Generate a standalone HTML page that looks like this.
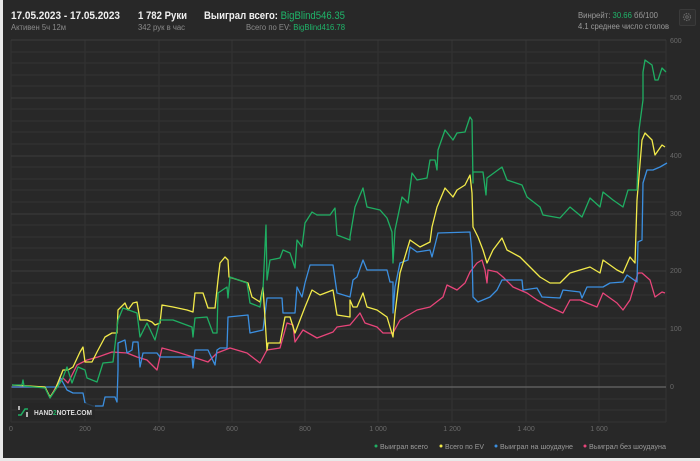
<!DOCTYPE html>
<html><head><meta charset="utf-8"><style>
html,body{margin:0;padding:0;width:700px;height:461px;background:#e8e8e8;overflow:hidden;font-family:"Liberation Sans","Noto Sans CJK SC",sans-serif}
#p{position:absolute;left:3px;top:0;width:697px;height:458px;background:#282828}
</style></head><body>
<div id="p"></div>
<div style="position:absolute;left:679px;top:9px;width:15px;height:15px;border:1px solid #3a3a3a;background:#2e2e2e;border-radius:2px"></div>
<svg style="position:absolute;left:681px;top:11px" width="12" height="12" viewBox="0 0 12 12"><circle cx="6" cy="6" r="3.5" fill="none" stroke="#666" stroke-width="1.2" stroke-dasharray="1.5 1"/><circle cx="6" cy="6" r="1.3" fill="none" stroke="#666"/></svg>
<svg style="position:absolute;left:0;top:0" width="700" height="461" font-family="Liberation Sans,sans-serif">
<g font-size="11" font-weight="bold" fill="#f0f0f0">
<text x="11" y="19" textLength="109" lengthAdjust="spacingAndGlyphs">17.05.2023 - 17.05.2023</text>
<text x="138" y="19" textLength="49" lengthAdjust="spacingAndGlyphs">1 782 Руки</text>
<text x="204" y="19" textLength="141" lengthAdjust="spacingAndGlyphs">Выиграл всего: <tspan fill="#1fb56a" font-weight="normal">BigBlind546.35</tspan></text>
</g>
<g font-size="8" fill="#8a8a8a">
<text x="11" y="30" textLength="55" lengthAdjust="spacingAndGlyphs">Активен 5ч 12м</text>
<text x="138" y="30" textLength="47" lengthAdjust="spacingAndGlyphs">342 рук в час</text>
<text x="246" y="30" textLength="99" lengthAdjust="spacingAndGlyphs">Всего по EV: <tspan fill="#1fb56a">BigBlind416.78</tspan></text>
</g>
<g font-size="8.5" fill="#9a9a9a">
<text x="578" y="18" textLength="80" lengthAdjust="spacingAndGlyphs">Винрейт: <tspan fill="#1fb56a">30.66</tspan> бб/100</text>
<text x="578" y="29" textLength="91" lengthAdjust="spacingAndGlyphs">4.1 среднее число столов</text>
</g>
<g stroke="#333" stroke-width="1">
<line x1="11" y1="52" x2="666" y2="52"/><line x1="11" y1="63" x2="666" y2="63"/><line x1="11" y1="75" x2="666" y2="75"/><line x1="11" y1="86" x2="666" y2="86"/>
<line x1="11" y1="109" x2="666" y2="109"/><line x1="11" y1="121" x2="666" y2="121"/><line x1="11" y1="132" x2="666" y2="132"/><line x1="11" y1="144" x2="666" y2="144"/>
<line x1="11" y1="167" x2="666" y2="167"/><line x1="11" y1="179" x2="666" y2="179"/><line x1="11" y1="190" x2="666" y2="190"/><line x1="11" y1="202" x2="666" y2="202"/>
<line x1="11" y1="225" x2="666" y2="225"/><line x1="11" y1="237" x2="666" y2="237"/><line x1="11" y1="248" x2="666" y2="248"/><line x1="11" y1="260" x2="666" y2="260"/>
<line x1="11" y1="283" x2="666" y2="283"/><line x1="11" y1="295" x2="666" y2="295"/><line x1="11" y1="306" x2="666" y2="306"/><line x1="11" y1="318" x2="666" y2="318"/>
<line x1="11" y1="341" x2="666" y2="341"/><line x1="11" y1="353" x2="666" y2="353"/><line x1="11" y1="364" x2="666" y2="364"/><line x1="11" y1="376" x2="666" y2="376"/>
<line x1="11" y1="399" x2="666" y2="399"/><line x1="11" y1="410" x2="666" y2="410"/><line x1="11" y1="422" x2="666" y2="422"/>
<line x1="11" y1="40" x2="11" y2="422"/><line x1="85" y1="40" x2="85" y2="422"/><line x1="159" y1="40" x2="159" y2="422"/><line x1="232" y1="40" x2="232" y2="422"/><line x1="305" y1="40" x2="305" y2="422"/><line x1="378" y1="40" x2="378" y2="422"/><line x1="452" y1="40" x2="452" y2="422"/><line x1="526" y1="40" x2="526" y2="422"/><line x1="599" y1="40" x2="599" y2="422"/><line x1="666" y1="40" x2="666" y2="422"/>
</g>
<g stroke="#3d3d3d" stroke-width="1">
<line x1="11" y1="40" x2="666" y2="40"/><line x1="11" y1="98" x2="666" y2="98"/><line x1="11" y1="156" x2="666" y2="156"/><line x1="11" y1="214" x2="666" y2="214"/><line x1="11" y1="271" x2="666" y2="271"/><line x1="11" y1="329" x2="666" y2="329"/>
</g>
<line x1="11" y1="387" x2="666" y2="387" stroke="#777" stroke-width="1"/>
<g font-size="7" fill="#6a6a6a">
<text x="670" y="43">600</text><text x="670" y="100">500</text><text x="670" y="158">400</text><text x="670" y="216">300</text><text x="670" y="273">200</text><text x="670" y="331">100</text><text x="670" y="389">0</text>
<text x="11" y="431" text-anchor="middle">0</text><text x="85" y="431" text-anchor="middle">200</text><text x="159" y="431" text-anchor="middle">400</text><text x="232" y="431" text-anchor="middle">600</text><text x="305" y="431" text-anchor="middle">800</text><text x="378" y="431" text-anchor="middle">1 000</text><text x="452" y="431" text-anchor="middle">1 200</text><text x="526" y="431" text-anchor="middle">1 400</text><text x="599" y="431" text-anchor="middle">1 600</text>
</g>
<g fill="none" stroke-width="1.3" stroke-linejoin="round">
<polyline stroke="#e8457a" points="12,387 45,387 50,398 58,383 63,378 68,383 77,365 87,360 98,357 112,352 127,353 137,357 147,360 157,370 162,348 177,352 193,357 208,362 217,353 230,348 247,353 260,363 267,350 280,348 287,323 293,325 295,342 303,330 317,338 333,332 337,327 350,325 360,313 365,323 377,327 383,333 393,333 400,320 417,310 430,307 443,297 447,285 457,290 465,283 470,272 477,263 482,260 485,270 487,283 488,270 497,272 503,277 513,287 527,293 537,300 550,307 563,313 570,300 580,300 587,303 597,307 603,293 617,303 623,310 630,300 638,273 642,273 650,280 655,297 662,292 665,293"/>
<polyline stroke="#3b8fe0" points="12,387 58,387 60,377 67,390 73,393 83,393 85,403 93,406 103,406 105,397 115,397 117,402 118,370 118,343 125,340 127,353 132,350 133,342 138,342 140,367 143,353 157,353 160,357 192,357 193,368 195,350 208,350 215,365 217,350 220,348 227,348 228,317 248,315 250,333 263,330 267,298 282,298 283,313 295,313 297,287 302,297 305,283 310,265 333,265 337,293 350,297 353,280 357,277 363,260 367,270 387,270 390,282 393,282 393,313 395,287 400,263 408,260 410,247 417,252 430,250 432,257 438,233 470,232 472,253 473,297 478,302 490,297 497,290 502,280 522,280 523,290 537,288 542,297 560,298 563,290 580,292 582,298 587,287 603,287 610,283 623,282 627,275 637,282 638,242 642,240 643,183 647,170 653,170 660,167 667,163"/>
<polyline stroke="#f2ea4a" points="12,385 45,387 50,397 55,390 63,370 68,370 73,367 80,352 83,347 85,362 92,362 97,352 105,337 112,333 117,333 118,310 125,303 128,310 133,303 137,302 140,320 147,320 152,322 155,325 160,323 162,305 173,307 187,310 193,312 195,293 203,293 208,308 215,308 218,280 220,263 225,257 228,260 229,277 248,283 252,297 260,302 263,287 267,350 268,343 280,343 285,317 290,317 295,333 300,320 305,307 312,290 320,295 333,290 337,315 350,317 350,300 353,307 357,307 363,293 367,307 377,310 387,317 393,337 395,313 400,273 410,240 420,247 430,242 432,227 437,207 445,188 453,197 457,190 465,185 470,175 472,193 473,227 478,237 483,250 487,263 493,250 502,238 507,250 520,257 530,267 540,277 550,283 560,283 570,273 580,270 590,267 600,273 603,260 617,270 623,273 630,257 635,263 637,200 642,140 645,133 652,140 655,155 662,145 665,147"/>
<polyline stroke="#1fae62" points="12,385 22,385 23,380 24,386 45,388 50,398 62,380 67,367 72,383 78,367 85,370 87,378 97,382 103,363 113,362 118,320 123,308 137,313 140,337 147,323 155,340 160,320 173,320 192,327 193,337 195,318 207,317 213,333 217,333 218,293 227,287 228,298 230,277 247,283 250,303 260,307 263,290 266,225 267,280 270,260 280,258 283,250 290,253 295,268 297,240 302,247 305,223 312,212 317,215 330,215 335,208 337,235 350,240 350,237 355,207 363,188 367,207 380,210 387,218 392,232 393,263 395,230 402,197 408,203 412,173 417,180 427,178 430,160 435,160 437,170 438,150 445,130 453,140 457,133 465,132 470,117 472,120 473,183 473,172 483,172 486,195 487,178 502,167 507,180 522,185 527,197 540,207 543,215 560,218 570,207 582,217 590,198 600,207 603,192 613,200 623,207 628,190 637,190 639,130 643,100 643,72 645,60 652,65 655,80 658,80 662,68 666,72"/>
</g>
<g transform="translate(17,404)">
<rect x="0" y="-1" width="78" height="16" fill="#262626" opacity="0.8"/>
<line x1="2" y1="2" x2="2" y2="6" stroke="#ddd" stroke-width="1.5"/><line x1="10" y1="8" x2="10" y2="13" stroke="#ddd" stroke-width="1.5"/>
<polyline points="1,11 4,11 8,5 11,5" fill="none" stroke="#1fae62" stroke-width="1.5"/>
<text x="17" y="11" font-size="7" font-weight="bold" fill="#ddd" textLength="58" lengthAdjust="spacingAndGlyphs">HAND<tspan fill="#1fae62">2</tspan>NOTE.COM</text>
</g>
<g font-size="7" fill="#9a9a9a">
<circle cx="376" cy="446" r="1.5" fill="#1fae62"/><text x="380" y="449" textLength="48" lengthAdjust="spacingAndGlyphs">Выиграл всего</text>
<circle cx="441" cy="446" r="1.5" fill="#f2ea4a"/><text x="445" y="449" textLength="39" lengthAdjust="spacingAndGlyphs">Всего по EV</text>
<circle cx="496" cy="446" r="1.5" fill="#3b8fe0"/><text x="500" y="449" textLength="73" lengthAdjust="spacingAndGlyphs">Выиграл на шоудауне</text>
<circle cx="585" cy="446" r="1.5" fill="#e8457a"/><text x="589" y="449" textLength="77" lengthAdjust="spacingAndGlyphs">Выиграл без шоудауна</text>
</g>
</svg>
</body></html>
